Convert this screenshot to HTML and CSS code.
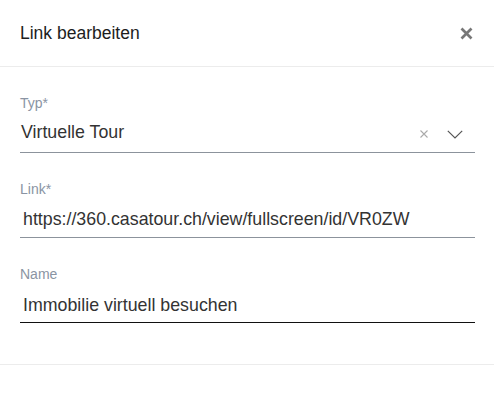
FILE: index.html
```html
<!DOCTYPE html>
<html lang="de">
<head>
<meta charset="utf-8">
<title>Link bearbeiten</title>
<link rel="stylesheet" href="styles.css">
</head>
<body>
<div class="dialog">
  <div class="header">
    <div class="title">Link bearbeiten</div>
    <button class="close" aria-label="Schliessen">
      <svg width="13" height="13" viewBox="0 0 13 13"><path d="M1.5 1.5 L11.5 11.5 M11.5 1.5 L1.5 11.5" stroke="#777" stroke-width="2.7" stroke-linecap="butt"/></svg>
    </button>
  </div>
  <div class="body">
    <div class="field field-select">
      <div class="label">Typ*</div>
      <div class="control">
        <span class="value">Virtuelle Tour</span>
        <span class="icons">
          <svg class="clear" width="8" height="8" viewBox="0 0 8 8"><path d="M0.5 0.5 L7.5 7.5 M7.5 0.5 L0.5 7.5" stroke="#aaa" stroke-width="1.1"/></svg>
          <svg class="chev" width="16" height="9" viewBox="0 0 16 9"><path d="M0.8 0.8 L8 8 L15.2 0.8" fill="none" stroke="#555" stroke-width="1.2"/></svg>
        </span>
      </div>
    </div>
    <div class="field">
      <div class="label">Link*</div>
      <div class="control input">https://360.casatour.ch/view/fullscreen/id/VR0ZW</div>
    </div>
    <div class="field">
      <div class="label">Name</div>
      <div class="control input focused">Immobilie virtuell besuchen</div>
    </div>
  </div>
  <div class="footer"></div>
</div>
</body>
</html>
```
FILE: styles.css
```css
html, body {
  margin: 0;
  padding: 0;
  background: #fff;
}
body {
  font-family: "Liberation Sans", Arial, sans-serif;
  width: 494px;
  height: 407px;
  overflow: hidden;
}
.dialog {
  display: flex;
  flex-direction: column;
  height: 407px;
}
.header {
  height: 67px;
  box-sizing: border-box;
  border-bottom: 1px solid #ececec;
  display: flex;
  align-items: center;
  justify-content: space-between;
  padding: 0 21px 0 20px;
}
.title {
  font-size: 17.5px;
  color: #1d1d1d;
}
.close {
  border: 0;
  background: none;
  padding: 0;
  width: 13px;
  height: 13px;
  display: flex;
  margin-top: 1px;
}
.body {
  padding: 28px 19px 0 20px;
  display: flex;
  flex-direction: column;
  gap: 28px;
  height: 298px;
  box-sizing: border-box;
  border-bottom: 1px solid #ececec;
}
.label {
  font-size: 14px;
  line-height: 16px;
  color: #8a94a3;
}
.control {
  font-size: 17.8px;
  line-height: 24px;
  color: #333;
  border-bottom: 1px solid #8c939c;
  height: 42px;
  padding-top: 9px;
  box-sizing: border-box;
  display: flex;
  align-items: flex-start;
}
.field-select .control {
  padding-left: 1px;
  justify-content: space-between;
}
.input {
  display: block;
  padding-left: 3px;
  padding-top: 10px;
  height: 41px;
}
.focused {
  border-bottom-color: #111;
  height: 41px;
  padding-top: 11px;
}
.icons {
  display: flex;
  align-items: center;
  gap: 19px;
  height: 24px;
  padding-right: 12px;
  padding-top: 2px;
}
.footer {
  flex: 1;
}
```
